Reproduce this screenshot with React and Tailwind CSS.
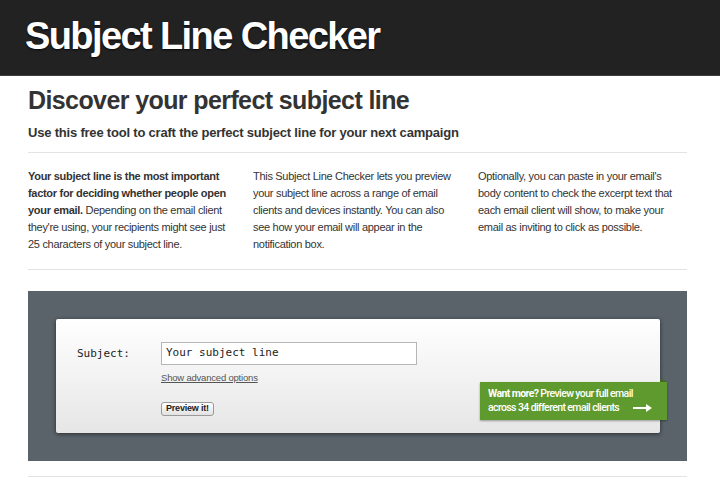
export default function App() {
  const sans = { fontFamily: '"Liberation Sans", Arial, sans-serif' };
  return (
    <div className="w-[720px] min-h-[481px] bg-white overflow-hidden" style={sans}>
      <div className="h-[76px] bg-[#222222] border-b border-[#3c3c3c] flex items-center pl-[25px]">
        <h1
          className="text-white font-bold text-[38px] tracking-[-1.6px] leading-none mt-[-4px]"
          style={{ textShadow: '0 1px 2px rgba(0,0,0,0.8)' }}
        >
          Subject Line Checker
        </h1>
      </div>
      <div className="mx-[28px] w-[659px]">
        <h2 className="text-[#333] font-bold text-[25px] tracking-[-0.6px] leading-none mt-[12px]">
          Discover your perfect subject line
        </h2>
        <p className="text-[#333] font-bold text-[13px] tracking-[-0.2px] leading-none mt-[13px]">
          Use this free tool to craft the perfect subject line for your next campaign
        </p>
        <div className="h-px bg-[#e3e3e3] mt-[13px]" />
        <div className="grid grid-cols-[205px_205px_205px] gap-[20px] text-[#333] text-[11px] tracking-[-0.3px] leading-[17px] mt-[15px]">
          <p>
            <b>Your subject line is the most important factor for deciding whether people open your email.</b>{' '}
            Depending on the email client they're using, your recipients might see just 25 characters of your subject line.
          </p>
          <p>
            This Subject Line Checker lets you preview your subject line across a range of email clients and devices instantly. You can also see how your email will appear in the notification box.
          </p>
          <p>
            Optionally, you can paste in your email's body content to check the excerpt text that each email client will show, to make your email as inviting to click as possible.
          </p>
        </div>
        <div className="h-px bg-[#e3e3e3] mt-[16px]" />
        <div className="mt-[21px] bg-[#5a636a] p-[28px] pr-[27px]">
          <div
            className="relative h-[114px] bg-gradient-to-b from-white to-[#e6e6e6] rounded-[2px] shadow-[0_1px_4px_rgba(0,0,0,0.55)] flex"
          >
            <div
              className="w-[105px] pl-[21px] pt-[27px] text-[11px] text-[#222]"
              style={{ fontFamily: '"DejaVu Sans Mono", monospace' }}
            >
              Subject:
            </div>
            <div className="pt-[23px] flex flex-col items-start">
              <div
                className="w-[256px] h-[23px] bg-white border border-[#b5b5b5] flex items-center pl-[4px] text-[11px] text-[#222]"
                style={{ fontFamily: '"DejaVu Sans Mono", monospace' }}
              >
                Your subject line
              </div>
              <a className="mt-[8px] text-[9.5px] text-[#555] underline leading-none tracking-[-0.2px]">
                Show advanced options
              </a>
              <button className="mt-[19px] h-[14px] px-[4px] border border-[#9a9a9a] rounded-[3px] bg-gradient-to-b from-white to-[#e2e2e2] text-[9px] font-bold text-[#222] leading-none tracking-[-0.2px]">
                Preview it!
              </button>
            </div>
            <div className="absolute left-[424px] top-[63px] w-[187px] h-[38px] bg-[#5e9a2e] shadow-[0_1px_2px_rgba(0,0,0,0.35)] pl-[8px] pt-[5px] text-white text-[10.5px] font-medium leading-[14px] tracking-[-0.6px]"
              style={{ fontFamily: 'Roboto, "Liberation Sans", sans-serif' }}
            >
              <div>
                <span className="font-bold">Want more?</span> Preview your full email
              </div>
              <div className="flex items-center">
                across 34 different email clients
                <svg width="20" height="10" viewBox="0 0 20 10" className="ml-[14px]">
                  <path d="M0 4h13V1l6 4-6 4V6H0z" fill="#fff" />
                </svg>
              </div>
            </div>
            <div className="absolute left-[604px] top-[60px] w-0 h-0 border-l-[7px] border-l-[#3e6a1c] border-t-[3px] border-t-transparent" />
          </div>
        </div>
        <div className="h-px bg-[#e3e3e3] mt-[15px]" />
      </div>
    </div>
  );
}
